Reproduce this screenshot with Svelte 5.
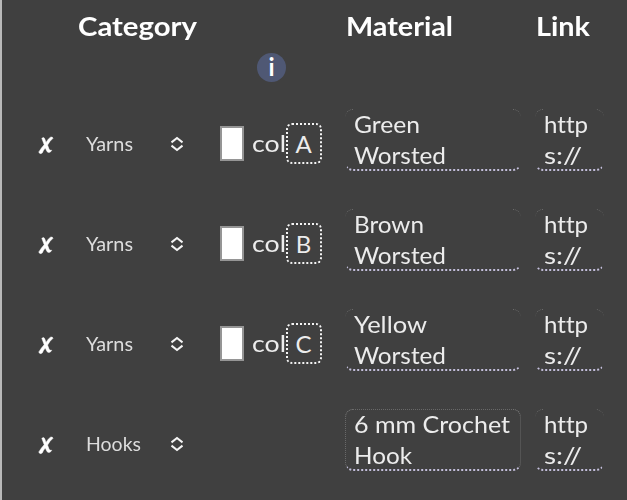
<script>
  const rows = [
    { category: ['Yarns', 47], color: 'A', material: [['Green', 66], ['Worsted', 92]] },
    { category: ['Yarns', 47], color: 'B', material: [['Brown', 70], ['Worsted', 92]] },
    { category: ['Yarns', 47], color: 'C', material: [['Yellow', 73], ['Worsted', 92]] },
    { category: ['Hooks', 55], color: '', material: [['6 mm Crochet', 156], ['Hook', 58]], edited: true }
  ];
  const link = [['http', 44], ['s://', 38]];

  // Stretches a label so that it fills the given width.
  function fit(node, width) {
    const natural = node.getBoundingClientRect().width;
    node.style.transform = `scaleX(${width / natural})`;
  }
</script>

<main>
  <header class="grid">
    <div class="category-head"><span use:fit={119}>Category</span></div>
    <div class="info">i</div>
    <div class="head"><span use:fit={107}>Material</span></div>
    <div class="head"><span use:fit={54}>Link</span></div>
  </header>

  {#each rows as row}
    <section class="grid row">
      <div class="category">
        <button aria-label="Remove">
          <svg width="18" height="20" viewBox="0 0 18 20">
            <path d="M4.8 3.3Q7.2 1.4 8 4.5L9 7.4Q11.3 3.4 13.5 2.2Q15.5 1.4 16 3.3Q12.5 6.2 10.6 10.1L12.1 14.3Q13 15.6 14.8 15.3Q12.5 19 10 16.6L8.3 13.1Q6.4 15.1 5.2 18Q2.9 19.6 1.7 17.2Q4.1 12.9 7.2 9.7Z" />
          </svg>
        </button>
        <div class="choice"><span use:fit={row.category[1]}>{row.category[0]}</span></div>
        <svg class="arrows" width="14" height="16" viewBox="0 0 14 16">
          <path d="M1.5 6.4 7 2l5.5 4.4M1.5 9.6 7 14l5.5-4.4" />
        </svg>
      </div>
      <div class="color">
        {#if row.color}
          <i class="swatch"></i>
          <div class="col"><span use:fit={34}>col</span></div>
          <div class="letter">{row.color}</div>
        {/if}
      </div>
      <div class="field material" class:edited={row.edited}>
        {#each row.material as [word, width]}
          <div><span use:fit={width}>{word}</span></div>
        {/each}
      </div>
      <div class="field link">
        {#each link as [word, width]}
          <div><span use:fit={width}>{word}</span></div>
        {/each}
      </div>
    </section>
  {/each}
</main>

<style>
  :global(body) { margin: 0; background: #404040; }
  main {
    box-sizing: border-box;
    width: 627px;
    height: 500px;
    overflow: hidden;
    border-left: 2px solid #b9b9b9;
    background: #404040;
    color: #ececec;
    font: 24px/30.5px Lato, sans-serif;
    font-variant-ligatures: none;
  }
  * { box-sizing: border-box; }
  span { display: inline-block; white-space: nowrap; transform-origin: left; }
  .grid {
    display: grid;
    grid-template-columns: 218px 125px 190px 92px;
  }
  header {
    height: 94px;
    padding-top: 10px;
    font-size: 26px;
    font-weight: 700;
    line-height: 32px;
    color: #fff;
  }
  .category-head { padding-left: 76px; }
  .head { padding-left: 1px; }
  .info {
    width: 29px;
    height: 29px;
    margin: 43px 0 0 37px;
    border-radius: 50%;
    background: #4f5874;
    text-align: center;
    font-size: 24px;
    line-height: 28px;
  }
  .row { height: 100px; align-items: center; }
  .category, .color { display: flex; align-items: center; }
  .category { font-size: 18.5px; }
  button {
    width: 18px;
    height: 20px;
    margin: 2px 0 0 35px;
    padding: 0;
    border: 0;
    background: none;
  }
  button svg { display: block; fill: #fff; stroke: #fff; stroke-width: 0.5; }
  .choice { width: 81px; margin-left: 31px; color: #dcdcdc; }
  .arrows { margin-left: 3px; fill: none; stroke: #f5f5f5; stroke-width: 2; }
  .color { margin-top: -1px; }
  .swatch {
    width: 24px;
    height: 35px;
    border: 2px solid #959595;
    background: #fff;
  }
  .col { width: 34px; margin-left: 8px; }
  .letter {
    width: 36px;
    height: 41px;
    border: 2px dotted #f4f4f4;
    border-radius: 6px;
    padding-right: 1px;
    text-align: center;
    line-height: 37px;
  }
  .field {
    position: relative;
    height: 62px;
    margin-top: -8px;
    border: 1px dotted transparent;
    border-bottom: 2px dotted #c4bfdc;
    border-radius: 8px;
    padding-left: 8px;
  }
  .field::before {
    content: '';
    position: absolute;
    inset: -1px -1px auto;
    height: 12px;
    border-top: 1px dotted #777;
    border-radius: 8px 8px 0 0;
    mask: linear-gradient(to right, #000 8px, transparent 8px calc(100% - 8px), #000 calc(100% - 8px));
  }
  .material { width: 176px; }
  .link { width: 69px; padding-left: 8px; }
  .field div { margin-top: -1px; margin-bottom: 1px; }
  .edited { border-color: #696969; border-bottom-color: #c4bfdc; }
</style>
